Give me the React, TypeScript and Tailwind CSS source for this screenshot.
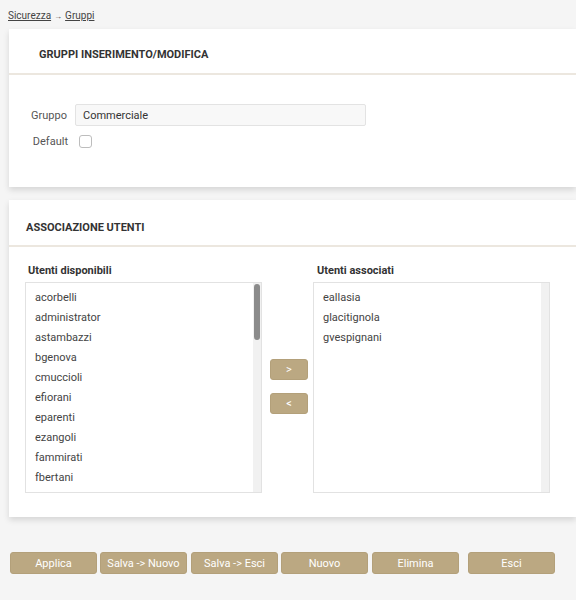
import React from "react"

const DISPONIBILI = [
  "acorbelli", "administrator", "astambazzi", "bgenova", "cmuccioli",
  "efiorani", "eparenti", "ezangoli", "fammirati", "fbertani", "fcanaletti",
]
const ASSOCIATI = ["eallasia", "glacitignola", "gvespignani"]

const ACTIONS: { label: string; ml: string }[] = [
  { label: "Applica", ml: "ml-0" },
  { label: "Salva -> Nuovo", ml: "ml-[3px]" },
  { label: "Salva -> Esci", ml: "ml-[4px]" },
  { label: "Nuovo", ml: "ml-[3px]" },
  { label: "Elimina", ml: "ml-[4px]" },
  { label: "Esci", ml: "ml-[9px]" },
]

function UserList({ items, thumb }: { items: string[]; thumb: boolean }) {
  return (
    <div className="flex h-[211px] w-[237px] overflow-hidden border border-[#e2e2e2] bg-white">
      <ul className="flex-1 overflow-hidden pt-[5px] pl-[9px]">
        {items.map(u => (
          <li key={u} className="h-[20px] text-[11px] leading-[20px] text-[#444]">{u}</li>
        ))}
      </ul>
      <div className="w-[8px] bg-[#f1f1f1] pt-[1px]">
        {thumb && <div className="ml-[1px] h-[56px] w-[6px] rounded-[3px] bg-[#8b8b8b]" />}
      </div>
    </div>
  )
}

function TanButton({ children, className = "" }: { children: React.ReactNode; className?: string }) {
  return (
    <button className={`rounded-[3px] border border-[#b3a07a] bg-[#bba882] text-[11px] leading-[13px] text-white ${className}`}>
      {children}
    </button>
  )
}

export default function App() {
  return (
    <div className="min-h-[600px] overflow-hidden bg-[#f5f5f5] font-['Roboto','Liberation_Sans',Arial,sans-serif]">
      {/* breadcrumb */}
      <div className="h-[29px] pt-[10px] pl-[8px] text-[10px] leading-[12px] text-[#444]">
        <a className="underline">Sicurezza</a>
        <span className="mx-[3px] text-[8px]">→</span>
        <a className="underline">Gruppi</a>
      </div>

      {/* card gruppo */}
      <div className="ml-[9px] bg-white shadow-[0_3px_6px_rgba(0,0,0,0.13)]">
        <div className="h-[46px] border-b-2 border-[#ece7df] pt-[19px] pl-[30px] text-[11px] font-bold leading-[13px] text-[#333]">
          GRUPPI INSERIMENTO/MODIFICA
        </div>
        <div className="pt-[29px] pb-[39px]">
          <div className="flex h-[22px] items-center">
            <span className="w-[58px] text-right text-[11px] leading-[13px] text-[#555]">Gruppo</span>
            <div className="ml-[8px] flex h-[22px] w-[291px] items-center rounded-[2px] border border-[#e3e3e3] bg-[#f8f8f8] pl-[7px] text-[11px] leading-[13px] text-[#333]">
              Commerciale
            </div>
          </div>
          <div className="mt-[8px] flex h-[14px] items-center">
            <span className="w-[59px] text-right text-[11px] leading-[13px] text-[#555]">Default</span>
            <span className="ml-[11px] h-[13px] w-[13px] rounded-[3px] border border-[#bdbdbd] bg-white" />
          </div>
        </div>
      </div>

      {/* card associazione */}
      <div className="mt-[13px] ml-[9px] bg-white shadow-[0_3px_6px_rgba(0,0,0,0.13)]">
        <div className="h-[47px] border-b-2 border-[#ece7df] pt-[21px] pl-[17px] text-[11px] font-bold leading-[13px] text-[#333]">
          ASSOCIAZIONE UTENTI
        </div>
        <div className="flex pt-[17px] pb-[24px] pl-[16px]">
          <div>
            <div className="mb-[5px] pl-[3px] text-[11px] font-bold leading-[13px] text-[#333]">Utenti disponibili</div>
            <UserList items={DISPONIBILI} thumb />
          </div>
          <div className="mr-[5px] ml-[8px] flex w-[38px] flex-col pt-[95px]">
            <TanButton className="h-[21px] w-[38px]">&gt;</TanButton>
            <TanButton className="mt-[13px] h-[21px] w-[38px]">&lt;</TanButton>
          </div>
          <div>
            <div className="mb-[5px] pl-[4px] text-[11px] font-bold leading-[13px] text-[#333]">Utenti associati</div>
            <UserList items={ASSOCIATI} thumb={false} />
          </div>
        </div>
      </div>

      {/* azioni */}
      <div className="mt-[35px] flex pl-[10px]">
        {ACTIONS.map(a => (
          <TanButton key={a.label} className={`h-[22px] w-[87px] ${a.ml}`}>{a.label}</TanButton>
        ))}
      </div>
    </div>
  )
}
